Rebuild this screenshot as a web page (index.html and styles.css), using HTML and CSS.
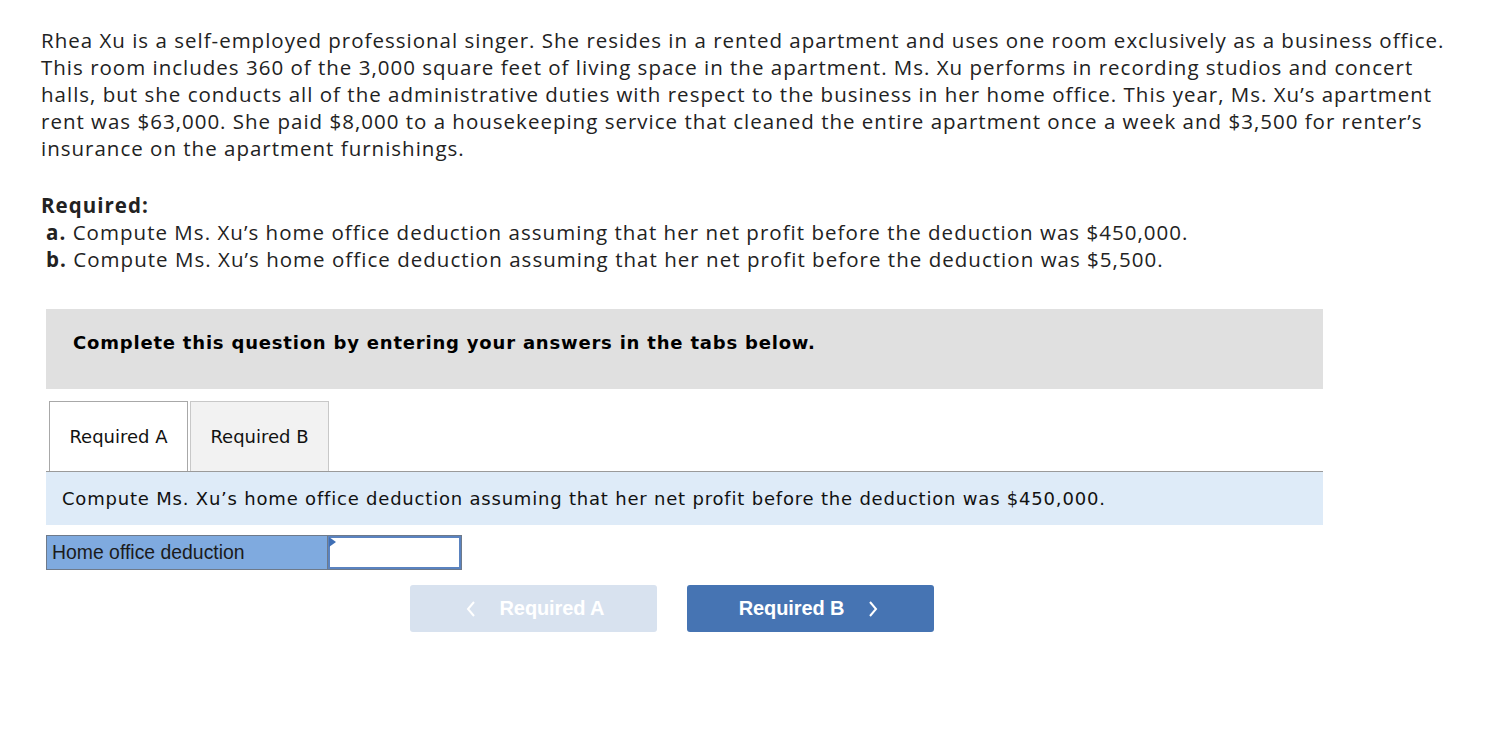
FILE: index.html
```html
<!DOCTYPE html>
<html lang="en">
<head>
<meta charset="utf-8">
<title>Home office deduction</title>
<link rel="stylesheet" href="styles.css">
</head>
<body>
<main class="page">
  <p class="intro">Rhea Xu is a self-employed professional singer. She resides in a rented apartment and uses one room exclusively as a business office.<br>This room includes 360 of the 3,000 square feet of living space in the apartment. Ms. Xu performs in recording studios and concert<br>halls, but she conducts all of the administrative duties with respect to the business in her home office. This year, Ms. Xu’s apartment<br>rent was $63,000. She paid $8,000 to a housekeeping service that cleaned the entire apartment once a week and $3,500 for renter’s<br>insurance on the apartment furnishings.</p>

  <div class="required">
    <p class="req-title">Required:</p>
    <p class="req-item"><b>a.</b> Compute Ms. Xu’s home office deduction assuming that her net profit before the deduction was $450,000.</p>
    <p class="req-item"><b>b.</b> Compute Ms. Xu’s home office deduction assuming that her net profit before the deduction was $5,500.</p>
  </div>

  <section class="work">
    <div class="notice">Complete this question by entering your answers in the tabs below.</div>

    <div class="tabs">
      <div class="tab tab-active">Required A</div>
      <div class="tab">Required B</div>
    </div>

    <div class="prompt">Compute Ms. Xu’s home office deduction assuming that her net profit before the deduction was $450,000.</div>

    <div class="answer-row">
      <div class="answer-label">Home office deduction</div>
      <div class="answer-input"><span class="flag"></span></div>
    </div>

    <div class="nav">
      <button class="nav-btn nav-prev" type="button"><svg class="chev" width="10" height="18" viewBox="0 0 10 18"><polyline points="8,2 2,9 8,16" fill="none" stroke="currentColor" stroke-width="2"/></svg><span>Required A</span></button>
      <button class="nav-btn nav-next" type="button"><span>Required B</span><svg class="chev" width="10" height="18" viewBox="0 0 10 18"><polyline points="2,2 8,9 2,16" fill="none" stroke="currentColor" stroke-width="2"/></svg></button>
    </div>
  </section>
</main>
</body>
</html>
```

FILE: styles.css
```css
* { box-sizing: border-box; }

body {
  margin: 0;
  background: #ffffff;
  color: #222222;
  font-family: "Open Sans", "Noto Sans", sans-serif;
}

.page {
  padding: 27px 0 0 41px;
}

.intro {
  margin: 0;
  font-size: 20.5px;
  letter-spacing: 1px;
  line-height: 27px;
  color: #222;
  white-space: nowrap;
}

.required {
  margin-top: 30px;
  font-size: 20.5px;
  letter-spacing: 1.03px;
  line-height: 27px;
}

.req-title {
  margin: 0;
  font-weight: 700;
}

.req-item {
  margin: 0 0 0 5px;
}

.req-item b { font-weight: 700; }

.work {
  margin: 36px 0 0 5px;
  width: 1277px;
  font-family: "DejaVu Sans", Verdana, sans-serif;
  color: #000;
}

.notice {
  height: 80px;
  background: #e0e0e0;
  padding: 22px 0 0 27px;
  font-size: 18px;
  font-weight: 700;
  line-height: 24px;
  letter-spacing: 0.8px;
}

.tabs {
  display: flex;
  gap: 2px;
  margin-top: 12px;
  padding-left: 3px;
  border-bottom: 1px solid #9a9a9a;
  height: 71px;
}

.tab {
  width: 139px;
  height: 70px;
  border: 1px solid #c8c8c8;
  border-bottom: none;
  background: #f2f2f2;
  font-size: 18px;
  line-height: 70px;
  text-align: center;
  color: #111;
}

.tab-active {
  background: #ffffff;
  border-color: #a8a8a8;
}

.prompt {
  height: 53px;
  background: #deebf8;
  padding-left: 16px;
  font-size: 18px;
  letter-spacing: 0.8px;
  line-height: 54px;
  color: #111;
}

.answer-row {
  display: flex;
  width: 416px;
  height: 35px;
  margin-top: 10px;
  border: 1px solid #6e7a8a;
}

.answer-label {
  width: 281px;
  background: #7faadf;
  border-right: 1px solid #6e7a8a;
  font-family: "Liberation Sans", Arial, sans-serif;
  font-size: 19.4px;
  line-height: 32px;
  padding-left: 5px;
  color: #1b1b1b;
}

.answer-input {
  position: relative;
  flex: 1;
  background: #fff;
  border: 2px solid #5a83c0;
}

.flag {
  position: absolute;
  left: -1px;
  top: -1px;
  width: 0;
  height: 0;
  border-top: 5px solid transparent;
  border-bottom: 5px solid transparent;
  border-left: 7px solid #3f6fb5;
}

.nav {
  display: flex;
  gap: 30px;
  margin-top: 15px;
  padding-left: 364px;
}

.nav-btn {
  width: 247px;
  height: 47px;
  border: none;
  border-radius: 3px;
  color: #ffffff;
  font-family: "Liberation Sans", Arial, sans-serif;
  font-size: 20px;
  font-weight: 700;
  letter-spacing: -0.1px;
  display: flex;
  align-items: center;
  justify-content: center;
  gap: 24px;
  padding: 0;
}

.nav-prev {
  background: #d8e2ef;
  padding-left: 3px;
}

.nav-next {
  background: #4674b3;
  padding-right: 4px;
}

.chev {
  display: block;
}
```
